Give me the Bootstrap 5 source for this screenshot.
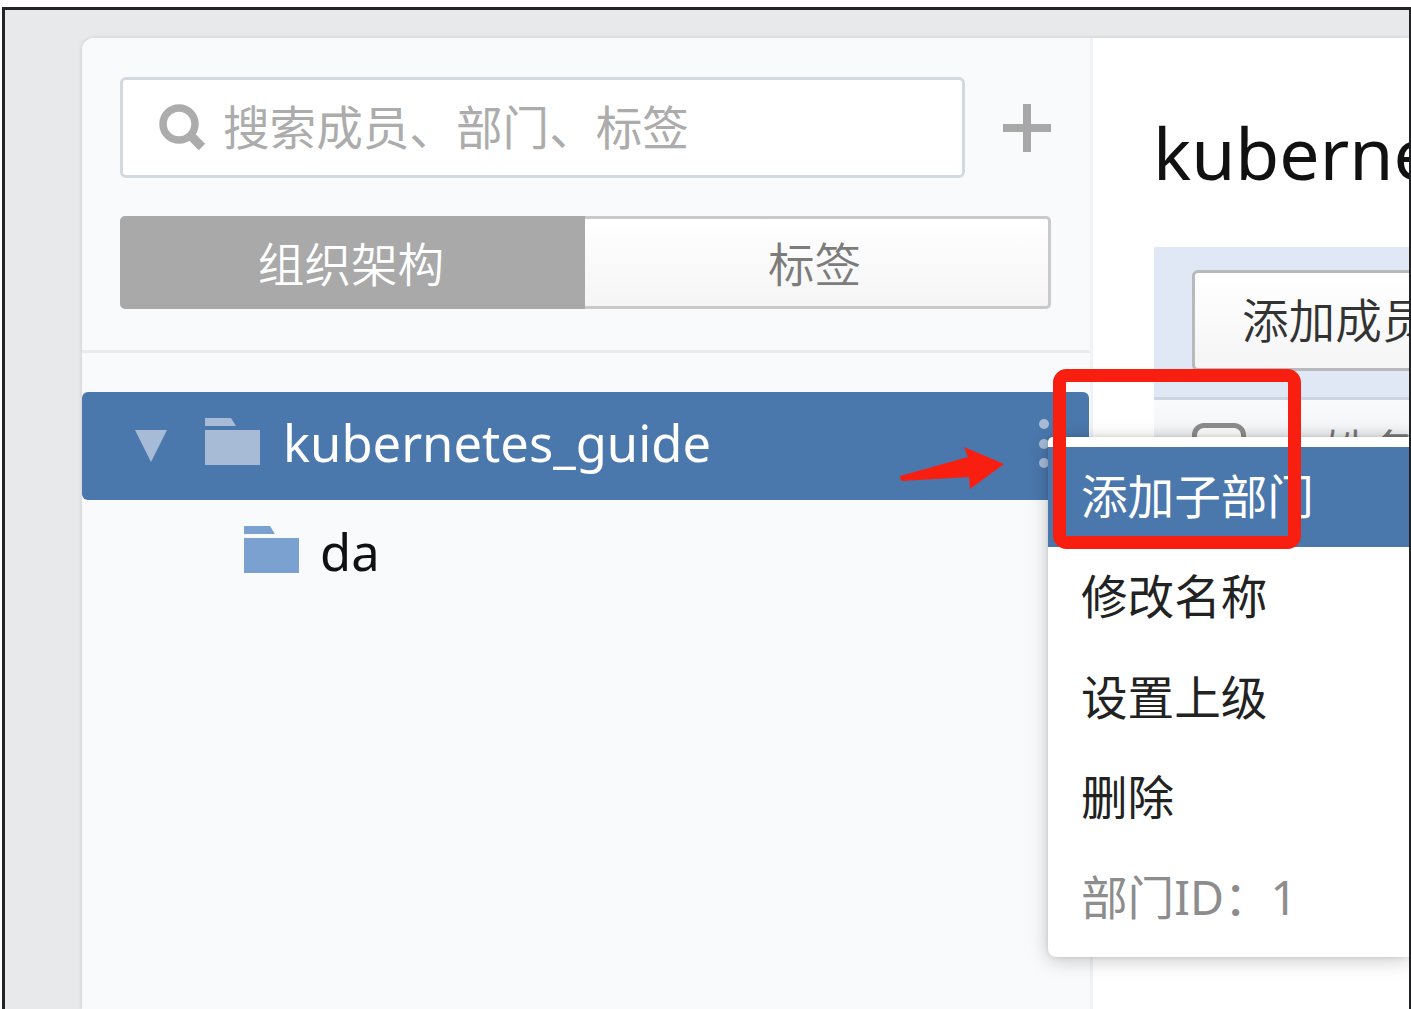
<!DOCTYPE html>
<html lang="zh-CN">
<head>
<meta charset="utf-8">
<title>kubernetes_guide</title>
<meta name="viewport" content="width=device-width, initial-scale=1">
<link href="https://cdn.jsdelivr.net/npm/bootstrap@5.3.0/dist/css/bootstrap.min.css" rel="stylesheet">
<style>
  body { font-family: "Noto Sans", "Noto Sans CJK SC", sans-serif; font-size: 46.6px; line-height: 1; color: #111; background: #fff; height: 1009px; overflow: hidden; }
  .cjk { font-family: "Noto Sans CJK SC", sans-serif; font-weight: 350; white-space: nowrap; }
  .shell { height: 1009px; padding-top: 7px; padding-left: 2px; }
  .frame { min-width: 0; border: solid #222425; border-width: 3px 2px 0 3px; background: #e8e9eb; padding: 28px 0 0 77px; }
  .window { border-top-left-radius: 12px; background: #fff; box-shadow: 0 0 4px rgba(0,0,0,.14); }
  .side { width: 1011px; background: #f9fafc; border-right: 3px solid #f1f2f7; border-top-left-radius: 12px; }
  .side-head { padding: 39px 39px 41px 38px; border-bottom: 3px solid #e9ebef; }
  .search { width: 845px; height: 101px; border: 3px solid #d3d9e0; border-radius: 6px; background: #fff; padding-left: 36px; gap: 17px; }
  .search .form-control { font: inherit; font-family: "Noto Sans CJK SC", sans-serif; line-height: 60px; padding: 0 0 5px; color: #a9a9a9; }
  .search .form-control::placeholder { color: #acacac; opacity: 1; }
  .add { margin-left: 38px; }
  .seg { margin-top: 38px; width: 931px; height: 93px; }
  .seg .btn { font-size: inherit; line-height: 1; border: 3px solid #c9c9c9; border-radius: 5px; padding: 0 4px 0 0; width: 50%; color: #7c7c7c; background: linear-gradient(#fff, #f5f5f5); }
  .seg .btn:first-child { background: #a9a9a9; border-color: #a9a9a9; color: #fff; }
  .seg .btn:last-child { border-left: 0; }
  .tree { padding-top: 39px; }
  .node { height: 108px; width: 1007px; border-radius: 6px; }
  .node-on { background: #4a77ac; color: #fff; padding-left: 53px; }
  .node-sub { color: #111; padding-left: 162px; }
  .node-text { font-size: 50.7px; margin-left: 23px; padding-bottom: 5px; }
  .node-sub .node-text { margin-left: 21px; padding-bottom: 3px; }
  .folder { margin-bottom: 10px; }
  .caret { margin-right: 38px; }
  .dots { margin-right: 40px; margin-bottom: 4px; }
  .title { font-size: 71.5px; padding: 79px 0 0 60px; height: 209px; white-space: nowrap; }
  .main { overflow: hidden; }
  .tools { margin-left: 61px; height: 153px; background: #dfe8f4; border-bottom: 3px solid #cbd6e2; padding: 23px 0 0 38px; }
  .tools .btn { width: 320px; height: 101px; font-size: inherit; line-height: 1; text-align: left; border: 3px solid #b7b9bc; border-radius: 6px; background: linear-gradient(#fff, #f5f5f5); color: #333; padding: 0 0 5px 47px; }
  .thead-row { margin-left: 61px; height: 90px; background: linear-gradient(#f9fafc, #f6f7f8 25px, #e8e9ea 40px); padding: 23px 0 0 38px; color: #777; }
  .box { width: 54px; height: 54px; border: 5px solid #8c8c8c; border-radius: 12px; background: #fafafa; }
  .thead-text { margin: 3px 0 0 77px; }
  .popmenu { position: absolute; left: 1048px; top: 437px; width: 361px; height: 520px; background: #fff; padding-top: 10px; border-radius: 5px 0 0 8px; box-shadow: 0 3px 20px rgba(0,0,0,.22), 0 0 4px rgba(0,0,0,.12); clip-path: inset(-24px 0 -30px -30px); }
  .popmenu .dropdown-item { height: 100.2px; padding: 0 0 5px 33px; color: #222; font-size: inherit; }
  .popmenu .dropdown-item.active { background: #4a77ac; color: #fff; }
  .popmenu .dropdown-item.disabled { color: #8d8d8d; font-family: "Noto Sans", "Noto Sans CJK SC", sans-serif; padding-bottom: 1px; }
  .marks { position: absolute; left: 890px; top: 360px; }
</style>
<script src="https://cdn.jsdelivr.net/npm/bootstrap@5.3.0/dist/js/bootstrap.bundle.min.js"></script>
</head>
<body>
<div class="shell d-flex">
  <div class="frame d-flex flex-fill">
    <div class="window d-flex flex-fill overflow-hidden">
      <aside class="side flex-shrink-0">
        <div class="side-head">
          <div class="d-flex align-items-center">
            <div class="search d-flex align-items-center">
              <svg class="flex-shrink-0" width="47" height="48" viewBox="0 0 47 48" fill="none" stroke="#acacac"><circle cx="20" cy="20" r="16" stroke-width="7.5"/><path d="M31 31L43 43" stroke-width="9"/></svg>
              <input class="form-control border-0 shadow-none bg-transparent" type="text" placeholder="搜索成员、部门、标签">
            </div>
            <svg class="add" width="48" height="48" viewBox="0 0 48 48"><path d="M20 0h8v20h20v8H28v20h-8V28H0v-8h20z" fill="#a8a8a8"/></svg>
          </div>
          <div class="seg btn-group d-flex">
            <button class="btn cjk" type="button">组织架构</button>
            <button class="btn cjk" type="button">标签</button>
          </div>
        </div>
        <div class="tree">
          <div class="node node-on d-flex align-items-center">
            <svg class="caret" width="32" height="32" viewBox="0 0 32 32"><path d="M0 0h32L16 32z" fill="#a7bbd7"/></svg>
            <svg class="folder" width="55" height="47" viewBox="0 0 55 47"><path d="M0 0h26l5 8H0zM0 12h55v35H0z" fill="#a7bbd7"/></svg>
            <span class="node-text">kubernetes_guide</span>
            <svg class="dots ms-auto" width="10" height="50" viewBox="0 0 10 50" fill="#a7bbd7"><circle cx="5" cy="5" r="5"/><circle cx="5" cy="25" r="5"/><circle cx="5" cy="44" r="5"/></svg>
          </div>
          <div class="node node-sub d-flex align-items-center">
            <svg class="folder" width="55" height="47" viewBox="0 0 55 47"><path d="M0 0h26l5 8H0zM0 12h55v35H0z" fill="#7ba1d0"/></svg>
            <span class="node-text">da</span>
          </div>
        </div>
      </aside>
      <main class="main flex-fill">
        <div class="title">kuberne</div>
        <div class="tools"><button class="btn cjk" type="button">添加成员</button></div>
        <div class="thead-row d-flex">
          <span class="box flex-shrink-0"></span>
          <span class="thead-text cjk">姓名</span>
        </div>
      </main>
    </div>
  </div>
</div>

<div class="popmenu cjk">
  <a class="dropdown-item active d-flex align-items-center">添加子部门</a>
  <a class="dropdown-item d-flex align-items-center">修改名称</a>
  <a class="dropdown-item d-flex align-items-center">设置上级</a>
  <a class="dropdown-item d-flex align-items-center">删除</a>
  <a class="dropdown-item disabled d-flex align-items-center">部门ID：1</a>
</div>

<!-- hand-drawn highlight: arrow and box -->
<svg class="marks" width="420" height="200" viewBox="890 360 420 200">
  <rect x="1059.5" y="375.500" width="235" height="167" rx="7" fill="none" stroke="#f91f10" stroke-width="13"/>
  <path d="M900 476L968 457L964 447L1004 464L970 489L969 477L901 481Z" fill="#f91f10"/>
</svg>
</body>
</html>
